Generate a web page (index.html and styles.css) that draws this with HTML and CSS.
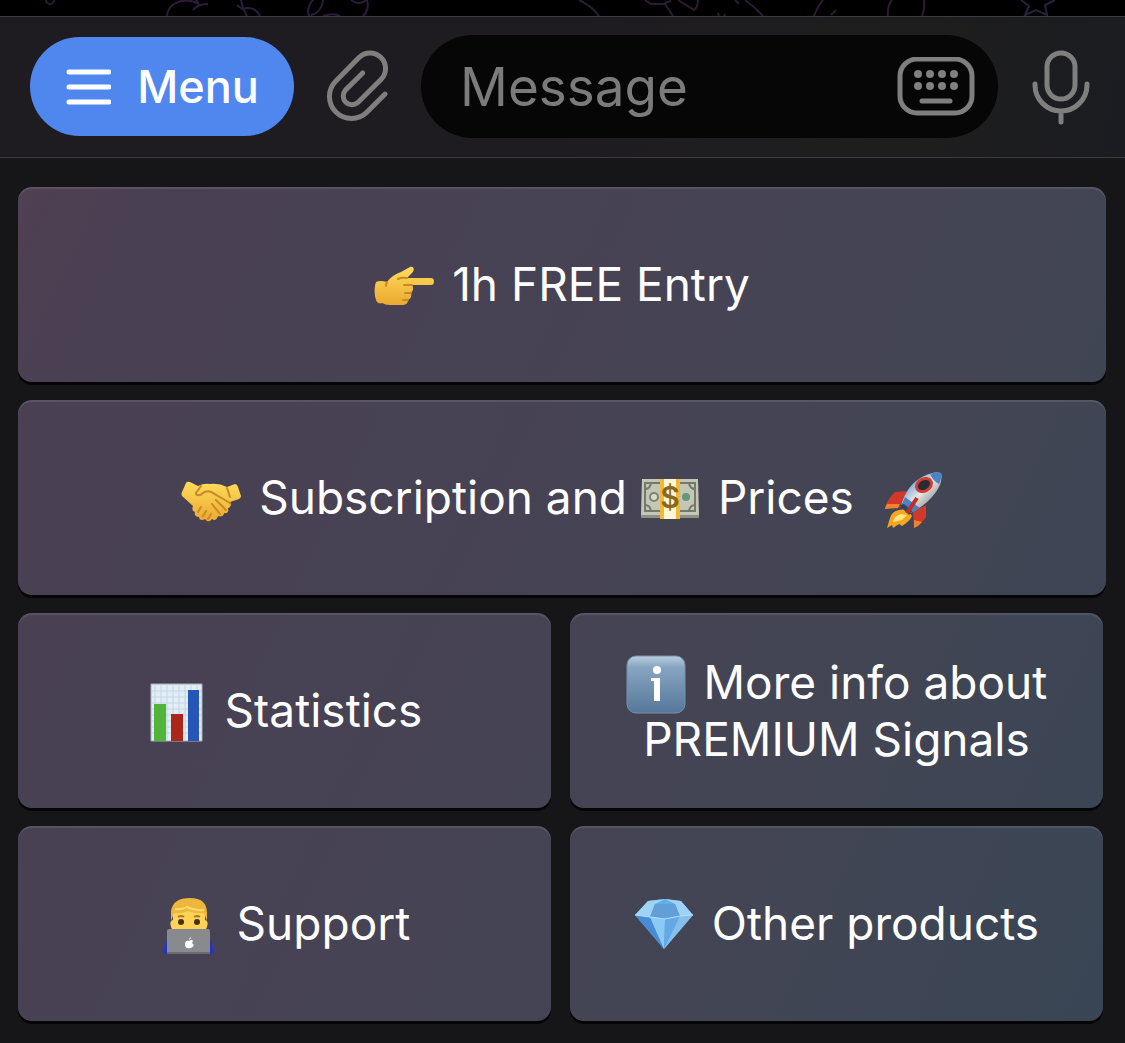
FILE: index.html
```
<!DOCTYPE html>
<html lang="en">

<head>
    <meta charset="utf-8">
    <meta name="viewport" content="width=device-width, initial-scale=1.0">
    <title>Chat</title>
    <link rel="stylesheet" href="styles.css">
</head>

<body>

    <div id="chat">
        <svg viewBox="0 0 1125 16" preserveAspectRatio="xMinYMin slice" aria-hidden="true">
            <g class="purple">
                <path d="M46 0a4 4 0 0 0 8 0" />
                <path d="M167 16C168 3 184-4 199 4M208 4c-8 0-12 2-15 6M196 0l3 4" />
                <path d="M237 5l5 4c9-3 15 1 18 7M241 0c1 7 4 12 6 16" />
                <path d="M309 16c-3-8 3-16 5-16M311 15c8-2 12-9 12-15M323 16c6-2 13-2 17 0M351 0c5 4 12 4 16-1M367 0c2 7 0 12-4 16" />
            </g>
            <g class="pink">
                <path d="M579 0q13 6 20 16" />
                <path d="M645 0l6 4h14q4 6 8 12M665 3l6-2M678 0l16 10q4-3 4-10M718 13l1 3M724 14l1 2M735 0l4 4M745 0q11 8 18 16" />
                <path d="M814 16q3-9 9-16M836 10l-5 5M888 16q-1-10 4-16M924 0q1 8-2 16" />
            </g>
            <g class="blue">
                <path d="M1021 0l8 6-4 9 11-5 11 5-2-10 10-5" />
            </g>
        </svg>
    </div>

    <form id="toolbar">
        <button type="button" class="menu">
            <svg width="46" height="38" viewBox="0 0 46 38" aria-hidden="true">
                <path d="M4 4h40M4 19h40M4 34h40" />
            </svg>
            Menu
        </button>

        <button type="button" class="icon" aria-label="Attach">
            <svg width="66" height="78" viewBox="0 0 66 78">
                <path d="M60.1 46.1L42.1 64.1A22 22 0 0 1 10.9 32.9L34 9.5A15.5 15.5 0 0 1 56 31.5L32.7 54.7A8.8 8.8 0 0 1 20.3 42.3L37.7 24.9" />
            </svg>
        </button>

        <div class="field">
            <input type="text" placeholder="Message" aria-label="Message">
            <button type="button" class="icon" aria-label="Keyboard">
                <svg width="78" height="60" viewBox="0 0 78 60">
                    <rect x="3" y="2" width="72" height="54" rx="17" />
                    <path d="M25 44h28" />
                    <g class="dots">
                        <circle cx="21" cy="17" r="4" />
                        <circle cx="33" cy="17" r="4" />
                        <circle cx="45" cy="17" r="4" />
                        <circle cx="57" cy="17" r="4" />
                        <circle cx="21" cy="29" r="4" />
                        <circle cx="33" cy="29" r="4" />
                        <circle cx="45" cy="29" r="4" />
                        <circle cx="57" cy="29" r="4" />
                    </g>
                </svg>
            </button>
        </div>

        <button type="button" class="icon" aria-label="Record voice">
            <svg width="58" height="76" viewBox="0 0 58 76">
                <rect x="15" y="4" width="28" height="46" rx="14" />
                <path d="M3 35v1a26 26 0 0 0 52 0v-1M29 62v11" />
            </svg>
        </button>
    </form>

    <main>
        <button class="key">
            <span>
                <svg class="emoji" viewBox="0 0 60 60" aria-hidden="true">
                    <defs>
                        <linearGradient id="skin" x1="0" y1="0" x2="0" y2="1">
                            <stop offset="0" stop-color="#ffdc5c" />
                            <stop offset="1" stop-color="#eaa92f" />
                        </linearGradient>
                    </defs>
                    <path fill="url(#skin)" d="M2 25q4-2 11 0 5-7 14-10l9-5c4-1 5 3 2 6l-5 5h24q3 0 3 3.500t-3 3.500H38c2 3 1 6-1 8 1 4-1 6-3 7 0 4-3 5-6 5H16q-5 0-8-2c-2 1-4 0-5-1-3-6-3-14-1-20z" />
                    <path class="crease" d="M33 21q-5-1-9 1M30 28h8M31 36h6M29 43h5M13 25q-1 2-1 4" />
                </svg>
                1h FREE Entry
            </span>
        </button>

        <button class="key">
            <span>
                <svg class="emoji" viewBox="0 0 60 60" aria-hidden="true">
                    <path fill="url(#skin)" d="M5 13q1-2 4-1l8 4q6-3 12-2 9-1 17 3l8-3q2 0 3 3l3 9q0 2-2 3l-9 3c2 3 0 6-2 6 1 4-1 6-4 5 0 3-3 4-6 3-1 4-4 5-6 3-3 4-6 2-7 0-3 2-6 1-6-2-3 0-5-2-4-5q-4-1-2-6L1 26q-1-2 0-4z" />
                    <path class="crease" d="M20 16l-5 7c0 3 4 3 7 0q4-3 8-1l19 11M35 30l10 10M31 34l8 10M17 42l3-5M22 46l3-5M27 49l3-5M46 18l3 9" />
                </svg>
                Subscription and
                <svg class="emoji" viewBox="0 0 60 60" aria-hidden="true">
                    <path fill="#8d9184" d="M1 44h58v4H1z" />
                    <path fill="#c4c7b6" d="M2 9h56l1 36H1z" />
                    <path fill="none" stroke="#74796b" stroke-width="2" d="M5 13h50v28H5zM5 19q5 0 6-6M5 35q5 0 6 6M55 19q-5 0-6-6M55 35q-5 0-6 6" />
                    <circle cx="14" cy="27" r="4" fill="#dadccf" stroke="#7c8274" stroke-width="2" />
                    <circle cx="46" cy="27" r="4" fill="#669778" />
                    <path fill="#f2b938" d="M20 9h20v40H20z" />
                    <path fill="#fff6d4" d="M24 9h12v40H24z" />
                    <text x="30" y="38" class="dollar">$</text>
                </svg>
                Prices
                <svg class="emoji rocket" viewBox="0 0 60 60" aria-hidden="true">
                    <defs>
                        <linearGradient id="hull" x1="0" y1="0" x2="1" y2="1">
                            <stop offset=".2" stop-color="#6e9fdb" />
                            <stop offset=".5" stop-color="#e6e6e2" />
                            <stop offset=".8" stop-color="#8b8e91" />
                        </linearGradient>
                    </defs>
                    <path fill="#d3392a" d="M27 21L12 22Q5 28 2 38l17-1zM43 35v12q-4 7-12 11l-1-16z" />
                    <path fill="#f2822f" d="M4 34q-2 3-2 5l13-1 2-4zM31 50v8q5-2 8-6z" />
                    <path fill="#f5a623" d="M16 40q-7 1-9 8l-3 10 5-3 1 3 6-4 3 2q8-5 10-10l-6-7z" />
                    <path fill="#ffe680" d="M18 44q-6 1-8 8l9-2 5-5z" />
                    <path fill="url(#hull)" d="M18 36q6-22 23-30Q51 1 58 3q2 9-5 19Q43 36 27 43z" />
                    <path fill="#4b83c5" d="M47 4q7-3 11-1 1 6-2 11-6-3-9-10zM22 27l15 11q-5 4-10 5l-9-7z" />
                    <path fill="#31445d" d="M16 35l5-1 8 7-3 4z" />
                    <path fill="none" stroke="#c22d28" stroke-width="4" d="M34 28L24 43" />
                    <ellipse cx="41" cy="15" rx="8" ry="6" transform="rotate(-30 41 15)" fill="#292b35" stroke="#d33c33" stroke-width="3" />
                </svg>
            </span>
        </button>

        <div class="pair">
            <button class="key">
                <span>
                    <svg class="emoji" viewBox="0 0 60 60" aria-hidden="true">
                        <path fill="#e3edf4" stroke="#aaaebb" d="M4 1h51v57H4z" />
                        <path fill="none" stroke="#c2d7e6" d="M8 2v56M14 2v56M20 2v56M26 2v56M32 2v56M38 2v56M44 2v56M50 2v56M5 8h49M5 14h49M5 20h49M5 26h49M5 32h49M5 38h49M5 44h49M5 50h49" />
                        <path fill="#51b53b" d="M7 21h12v37H7z" />
                        <path fill="#ad261c" d="M24 31h12v27H24z" />
                        <path fill="#2457b8" d="M41 7h11v51H41z" />
                    </svg>
                    Statistics
                </span>
            </button>
            <button class="key">
                <span>
                    <svg class="emoji" viewBox="0 0 60 60" aria-hidden="true">
                        <defs>
                            <linearGradient id="badge" x1="0" y1="0" x2="0" y2="1">
                                <stop offset="0" stop-color="#b9cfde" />
                                <stop offset=".2" stop-color="#86a5c1" />
                                <stop offset="1" stop-color="#56779a" />
                            </linearGradient>
                        </defs>
                        <rect x="1" y="1" width="58" height="57" rx="9" fill="url(#badge)" stroke="#7890a8" />
                        <path fill="#fff" d="M25 23h9v23h-6V26h-3z" />
                        <circle cx="31" cy="15" r="4" fill="#fff" />
                    </svg>
                    More info about<br>PREMIUM Signals
                </span>
            </button>
        </div>

        <div class="pair">
            <button class="key">
                <span>
                    <svg class="emoji" viewBox="0 0 60 60" aria-hidden="true">
                        <path fill="#2734c2" d="M8 44q-3 5-4 14h51q-1-9-4-14z" />
                        <path fill="#ffd357" d="M14 12h32v12q4 1 2 7-1 3-3 4-4 9-15 9T15 35q-2-1-3-4-2-6 2-7z" />
                        <path fill="#edb63c" d="M12 25V15Q14 2 31 2q17 0 17 15v8l-3-8q-8 1-16-2-7 3-14 2z" />
                        <path fill="none" stroke="#ffdc6b" stroke-width="2" d="M16 13q7 1 12-2 8 4 17 3" />
                        <path fill="none" stroke="#a9772a" stroke-width="2" d="M19 21q3-2 6 0M35 21q3-2 6 0" />
                        <circle cx="22" cy="26" r="3" fill="#473112" />
                        <circle cx="38" cy="26" r="3" fill="#473112" />
                        <rect x="8" y="33" width="43" height="25" rx="2" fill="#898a8e" />
                        <path fill="#6b6c70" d="M8 56h43v2H8z" />
                        <path fill="#fff" d="M30 45q3-2 4 0-2 2 1 4-2 4-5 3-3 1-4-3 0-5 4-4zM30 44q0-2 2-3 0 2-2 3z" />
                    </svg>
                    Support
                </span>
            </button>
            <button class="key">
                <span>
                    <svg class="emoji" viewBox="0 0 60 60" aria-hidden="true">
                        <path fill="#62aee8" d="M14 5l17-2 16 2 12 14-29 34L1 19z" />
                        <path fill="#9fd3f5" d="M14 5l17-2-10 5-5 13L1 19zM47 5l12 14-13 1-5-12-10-5z" />
                        <path fill="#629fd8" d="M21 8h20l5 12-15 3-15-2z" />
                        <path fill="#4a8bd8" d="M1 19l15 2 14 32z" />
                        <path fill="#8bcaf5" d="M16 21l15 2-1 30z" />
                        <path fill="#62a9e6" d="M31 23l15-3-16 33z" />
                        <path fill="#86bfec" d="M46 20l13-1-29 34z" />
                        <path fill="none" stroke="#b7dffa" d="M1 19l15 2 15 2 15-3 13-1" />
                    </svg>
                    Other products
                </span>
            </button>
        </div>
    </main>

</body>

</html>
```
FILE: styles.css
```
body {
    margin: 0;
    background-color: #161618;
    font-family: Inter, "Liberation Sans", sans-serif;
    color: white;
}

button,
input {
    padding: 0;
    border: none;
    background: none;
    font-family: inherit;
    color: inherit;
}

svg {
    display: block;
}

#chat {
    height: 16px;
    overflow: hidden;
    background-color: black;
}

#chat svg {
    width: 100%;
    fill: none;
    stroke-width: 2;
}

.purple {
    stroke: #2e1b3c;
}

.pink {
    stroke: #2d1c31;
}

.blue {
    stroke: #25233a;
}

#toolbar {
    display: flex;
    align-items: center;
    padding: 18px 35px 19px 30px;
    border-top: 1px solid #3c3b3f;
    border-bottom: 1px solid #3c3b3f;
    background: linear-gradient(100deg, #1e1c21 50%, #1e1e1e 80%, #1b1c21);
}

.menu {
    display: flex;
    align-items: center;
    justify-content: center;
    gap: 26px;
    width: 264px;
    height: 99px;
    margin-right: 31px;
    border-radius: 50px;
    background-color: #5087ef;
    font-size: 45px;
    font-weight: 500;
}

.menu svg {
    fill: none;
    stroke: white;
    stroke-width: 5;
    stroke-linecap: round;
}

.icon svg {
    fill: none;
    stroke: #7f7f7f;
    stroke-width: 5;
    stroke-linecap: round;
}

.icon .dots {
    fill: #7f7f7f;
    stroke: none;
}

.field {
    display: flex;
    flex: 1;
    align-items: center;
    min-width: 0;
    height: 103px;
    margin: 0 34px 0 30px;
    padding: 0 23px 0 39px;
    box-sizing: border-box;
    border-radius: 52px;
    background-color: #060606;
}

.field input {
    flex: 1;
    min-width: 0;
    outline: none;
    font-size: 53px;
}

.field input::placeholder {
    color: #7b7b7b;
    opacity: 1;
}

main {
    display: flex;
    flex-direction: column;
    gap: 18px;
    padding: 29px 19px 21px 18px;
}

.pair {
    display: grid;
    grid-template-columns: 1fr 1fr;
    gap: 19px;
    margin-right: 3px;
}

/* one gradient runs behind all the keys */
.key {
    min-height: 195px;
    border-radius: 14px;
    background: linear-gradient(115deg, #533f51, #494053 16%, #464354 50%, #424554 74%, #384555) fixed;
    box-shadow: 0 3px 0 #050506, inset 0 2px 1px rgba(255, 255, 255, .1);
    font-size: 46px;
    line-height: 57px;
}

.emoji {
    display: inline-block;
    width: 60px;
    height: 60px;
    margin: -6px 5px -6px 0;
    vertical-align: -10px;
}

.rocket {
    margin: -6px 0 -6px 16px;
}

.crease {
    fill: none;
    stroke: #c78a27;
    stroke-width: 2;
    stroke-linecap: round;
}

.dollar {
    font-size: 30px;
    font-weight: 600;
    text-anchor: middle;
    fill: #8a681e;
}
```
